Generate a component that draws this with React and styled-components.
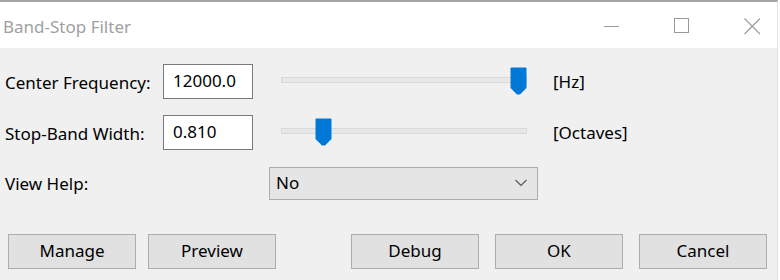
import React from "react";
import styled, { createGlobalStyle } from "styled-components";

const GlobalStyle = createGlobalStyle`
  html, body {
    margin: 0;
    padding: 0;
    background: #ffffff;
  }
  body {
    font-family: "Noto Sans", "Open Sans", sans-serif;
    font-size: 17px;
    color: #000000;
  }
`;

const Window = styled.div`
  width: 778px;
  height: 280px;
  display: flex;
  flex-direction: column;
  border-top: 2px solid #a3a3a3;
  border-right: 1px solid #e2e2e2;
  box-sizing: border-box;
  background: #f0f0f0;
`;

const TitleBar = styled.div`
  height: 46px;
  background: #ffffff;
  display: flex;
  align-items: center;
  justify-content: space-between;
  padding-left: 3px;
`;

const Title = styled.div`
  color: #a0a0a0;
  font-size: 17px;
  margin-top: 3px;
`;

const Caption = styled.div`
  display: flex;
  height: 100%;
  gap: 24px;
  padding-right: 2px;
  padding-top: 2px;
`;

const CaptionButton = styled.div`
  width: 46px;
  display: flex;
  align-items: center;
  justify-content: center;
  color: #9a9a9a;
`;

const Body = styled.div`
  flex: 1;
  display: flex;
  flex-direction: column;
  padding: 16px 0 0 5px;
`;

const ParamGrid = styled.div`
  display: grid;
  grid-template-columns: 158px 90px 28px 246px 26px auto;
  row-gap: 16px;
  align-items: center;
`;

const Label = styled.div`
  white-space: nowrap;
  grid-column: 1;
  padding-top: 1px;
`;

const TextBox = styled.div`
  grid-column: 2;
  height: 35px;
  box-sizing: border-box;
  border: 1px solid #7a7a7a;
  background: #ffffff;
  display: flex;
  align-items: center;
  padding-left: 9px;
  padding-bottom: 2px;
`;

const SliderTrack = styled.div`
  grid-column: 4;
  position: relative;
  height: 35px;
`;

const Rail = styled.div`
  position: absolute;
  left: 0;
  right: 0;
  top: 13px;
  height: 6px;
  box-sizing: border-box;
  background: #e7e7e7;
  border: 1px solid #d9d9d9;
`;

const Thumb = styled.svg`
  position: absolute;
  top: 3px;
  width: 17px;
  height: 28px;
`;

const Unit = styled.div`
  grid-column: 6;
  white-space: nowrap;
  padding-bottom: 1px;
`;

const HelpRow = styled.div`
  display: flex;
  align-items: center;
  margin-top: 17px;
`;

const HelpLabel = styled.div`
  width: 264px;
`;

const Dropdown = styled.div`
  width: 269px;
  height: 33px;
  box-sizing: border-box;
  border: 1px solid #adadad;
  background: #e5e5e5;
  display: flex;
  align-items: center;
  justify-content: space-between;
  padding: 0 10px 2px 6px;
`;

const ButtonRow = styled.div`
  display: flex;
  justify-content: space-between;
  margin-top: 34px;
  padding: 0 10px 0 3px;
`;

const ButtonGroup = styled.div`
  display: flex;
  gap: ${(props) => props.$gap}px;
`;

const Button = styled.div`
  width: 128px;
  height: 35px;
  box-sizing: border-box;
  border: 1px solid #adadad;
  background: #e1e1e1;
  display: flex;
  align-items: center;
  justify-content: center;
  padding-bottom: 2px;
`;

const ThumbIcon = ({ left }) => (
  <Thumb viewBox="0 0 17 28" style={{ left: `${left}px` }}>
    <path
      d="M1.5 0.5 H15.5 Q16.5 0.5 16.5 1.5 V21 L10 27.5 H7 L0.5 21 V1.5 Q0.5 0.5 1.5 0.5 Z"
      fill="#0078d7"
    />
  </Thumb>
);

const Slider = ({ value }) => (
  <SliderTrack>
    <Rail />
    <ThumbIcon left={Math.round(value * 229)} />
  </SliderTrack>
);

const params = [
  { label: "Center Frequency:", value: "12000.0", pos: 1, unit: "[Hz]" },
  { label: "Stop-Band Width:", value: "0.810", pos: 0.148, unit: "[Octaves]" },
];

export default function App() {
  return (
    <>
      <GlobalStyle />
      <Window>
        <TitleBar>
          <Title>Band-Stop Filter</Title>
          <Caption>
            <CaptionButton>
              <svg width="16" height="16" viewBox="0 0 16 16">
                <path d="M0 8.5 H15" stroke="currentColor" strokeWidth="1" />
              </svg>
            </CaptionButton>
            <CaptionButton>
              <svg width="16" height="16" viewBox="0 0 16 16">
                <rect x="0.5" y="0.5" width="14" height="14" fill="none" stroke="currentColor" strokeWidth="1" />
              </svg>
            </CaptionButton>
            <CaptionButton>
              <svg width="17" height="17" viewBox="0 0 17 17">
                <path d="M0.5 0.5 L16 16 M16 0.5 L0.5 16" stroke="currentColor" strokeWidth="1.1" />
              </svg>
            </CaptionButton>
          </Caption>
        </TitleBar>
        <Body>
          <ParamGrid>
            {params.map((p) => (
              <React.Fragment key={p.label}>
                <Label>{p.label}</Label>
                <TextBox>{p.value}</TextBox>
                <Slider value={p.pos} />
                <Unit>{p.unit}</Unit>
              </React.Fragment>
            ))}
          </ParamGrid>
          <HelpRow>
            <HelpLabel>View Help:</HelpLabel>
            <Dropdown>
              No
              <svg width="12" height="8" viewBox="0 0 12 8">
                <path d="M0.5 1 L6 6.5 L11.5 1" fill="none" stroke="#555" strokeWidth="1.1" />
              </svg>
            </Dropdown>
          </HelpRow>
          <ButtonRow>
            <ButtonGroup $gap={12}>
              <Button>Manage</Button>
              <Button>Preview</Button>
            </ButtonGroup>
            <ButtonGroup $gap={16}>
              <Button>Debug</Button>
              <Button>OK</Button>
              <Button>Cancel</Button>
            </ButtonGroup>
          </ButtonRow>
        </Body>
      </Window>
    </>
  );
}
